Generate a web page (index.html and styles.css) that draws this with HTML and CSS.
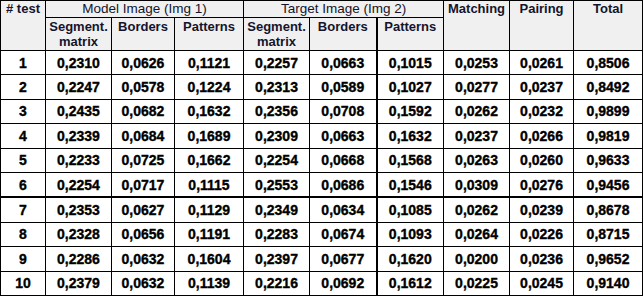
FILE: index.html
```html
<!DOCTYPE html>
<html>
<head>
<meta charset="utf-8">
<link rel="stylesheet" href="styles.css">
</head>
<body>
<table class="results">
  <colgroup>
    <col class="c-test">
    <col class="c-seg">
    <col class="c-bord">
    <col class="c-pat">
    <col class="c-seg2">
    <col class="c-bord2">
    <col class="c-pat2">
    <col class="c-match">
    <col class="c-pair">
    <col class="c-total">
  </colgroup>
  <thead>
    <tr class="h1">
      <th rowspan="2" class="bold">#&nbsp;test</th>
      <th colspan="3" class="group">Model Image (Img 1)</th>
      <th colspan="3" class="group">Target Image (Img 2)</th>
      <th rowspan="2" class="bold">Matching</th>
      <th rowspan="2" class="bold">Pairing</th>
      <th rowspan="2" class="bold">Total</th>
    </tr>
    <tr class="h2">
      <th class="bold">Segment.<br>matrix</th>
      <th class="bold">Borders</th>
      <th class="bold">Patterns</th>
      <th class="bold">Segment.<br>matrix</th>
      <th class="bold">Borders</th>
      <th class="bold thick-left">Patterns</th>
    </tr>
  </thead>
  <tbody>
    <tr><td>1</td><td>0,2310</td><td>0,0626</td><td>0,1121</td><td>0,2257</td><td>0,0663</td><td class="thick-left">0,1015</td><td>0,0253</td><td>0,0261</td><td>0,8506</td></tr>
    <tr><td>2</td><td>0,2247</td><td>0,0578</td><td>0,1224</td><td>0,2313</td><td>0,0589</td><td class="thick-left">0,1027</td><td>0,0277</td><td>0,0237</td><td>0,8492</td></tr>
    <tr><td>3</td><td>0,2435</td><td>0,0682</td><td>0,1632</td><td>0,2356</td><td>0,0708</td><td class="thick-left">0,1592</td><td>0,0262</td><td>0,0232</td><td>0,9899</td></tr>
    <tr><td>4</td><td>0,2339</td><td>0,0684</td><td>0,1689</td><td>0,2309</td><td>0,0663</td><td class="thick-left">0,1632</td><td>0,0237</td><td>0,0266</td><td>0,9819</td></tr>
    <tr><td>5</td><td>0,2233</td><td>0,0725</td><td>0,1662</td><td>0,2254</td><td>0,0668</td><td class="thick-left">0,1568</td><td>0,0263</td><td>0,0260</td><td>0,9633</td></tr>
    <tr><td>6</td><td>0,2254</td><td>0,0717</td><td>0,1115</td><td>0,2553</td><td>0,0686</td><td class="thick-left">0,1546</td><td>0,0309</td><td>0,0276</td><td>0,9456</td></tr>
    <tr class="thick-top"><td>7</td><td>0,2353</td><td>0,0627</td><td>0,1129</td><td>0,2349</td><td>0,0634</td><td class="thick-left">0,1085</td><td>0,0262</td><td>0,0239</td><td>0,8678</td></tr>
    <tr><td>8</td><td>0,2328</td><td>0,0656</td><td>0,1191</td><td>0,2283</td><td>0,0674</td><td class="thick-left">0,1093</td><td>0,0264</td><td>0,0226</td><td>0,8715</td></tr>
    <tr><td>9</td><td>0,2286</td><td>0,0632</td><td>0,1604</td><td>0,2397</td><td>0,0677</td><td class="thick-left">0,1620</td><td>0,0200</td><td>0,0236</td><td>0,9652</td></tr>
    <tr><td>10</td><td>0,2379</td><td>0,0632</td><td>0,1139</td><td>0,2216</td><td>0,0692</td><td class="thick-left">0,1612</td><td>0,0225</td><td>0,0245</td><td>0,9140</td></tr>
  </tbody>
</table>
</body>
</html>
```

FILE: styles.css
```css
html, body {
  margin: 0;
  padding: 0;
  background: #ffffff;
}

.results {
  border-collapse: collapse;
  table-layout: fixed;
  width: 643px;
  font-family: "Liberation Sans", Arial, sans-serif;
}

.c-test { width: 45px; }
.c-seg { width: 66px; }
.c-bord { width: 63px; }
.c-pat { width: 69px; }
.c-seg2 { width: 66px; }
.c-bord2 { width: 67px; }
.c-pat2 { width: 67px; }
.c-match { width: 66px; }
.c-pair { width: 64px; }
.c-total { width: 69px; }

.results th,
.results td {
  border: 1px solid #000;
  padding: 0;
  text-align: center;
}

.results th {
  background: #f0f0f0;
  color: #14142c;
  font-size: 13px;
  line-height: 15px;
  vertical-align: top;
  font-weight: normal;
}

.results th.group {
  font-size: 13.5px;
}

.results th.bold {
  font-weight: bold;
}

.h1 th {
  height: 16px;
}

.h2 th {
  height: 31px;
  padding-top: 1px;
}

.results td {
  height: 23.4px;
  font-size: 14px;
  font-weight: bold;
  color: #000;
  vertical-align: middle;
  -webkit-text-stroke: 0.35px #000;
}

.results .thick-left {
  border-left: 2px solid #000;
}

.results .thick-top td {
  border-top: 2px solid #000;
}
```
